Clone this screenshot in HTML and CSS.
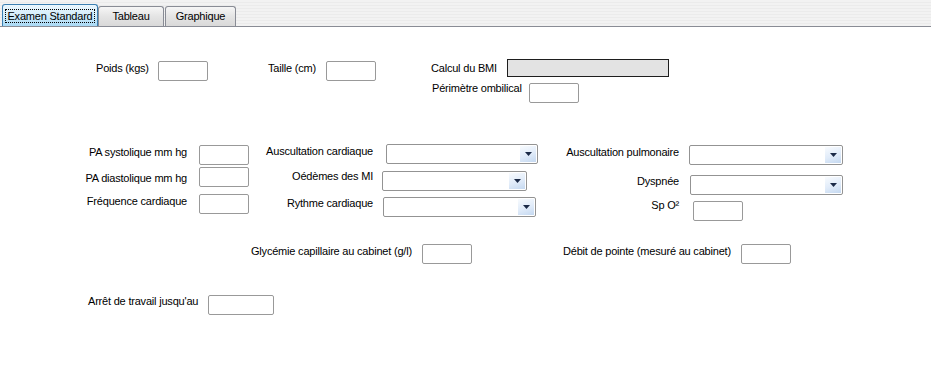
FILE: index.html
```html
<!DOCTYPE html>
<html lang="fr">
<head>
    <meta charset="UTF-8">
    <title>Examen Standard</title>
    <link rel="stylesheet" href="styles.css">
</head>
<body>
    <!-- Onglets -->
    <div class="tabs">
        <div class="tab active"><span class="focus">Examen Standard</span></div>
        <div class="tab tab-tableau">Tableau</div>
        <div class="tab tab-graph">Graphique</div>
    </div>

    <div class="page">
        <!-- Poids / taille / BMI -->
        <div class="row row-top">
            <label class="lbl l-poids">Poids (kgs)</label>
            <input type="text" class="txt t-top">
            <label class="lbl l-taille">Taille (cm)</label>
            <input type="text" class="txt t-top">
            <label class="lbl l-bmi">Calcul du BMI</label>
            <div class="bmi"></div>
        </div>
        <div class="row">
            <label class="lbl l-perim">Périmètre ombilical</label>
            <input type="text" class="txt t-perim">
        </div>

        <!-- Examen clinique -->
        <div class="clinic">
            <div class="col col1">
                <div class="item">
                    <label class="lbl">PA systolique mm hg</label>
                    <input type="text" class="txt">
                </div>
                <div class="item i-dia">
                    <label class="lbl">PA diastolique mm hg</label>
                    <input type="text" class="txt">
                </div>
                <div class="item i-freq">
                    <label class="lbl">Fréquence cardiaque</label>
                    <input type="text" class="txt">
                </div>
            </div>
            <div class="col col2">
                <div class="item">
                    <label class="lbl">Auscultation cardiaque</label>
                    <div class="combo c-ausc">
                        <span class="drop"><svg width="7" height="4" viewBox="0 0 7 4"><path d="M0 0h7L3.5 4z"/></svg></span>
                    </div>
                </div>
                <div class="item i-oed">
                    <label class="lbl">Oédèmes des MI</label>
                    <div class="combo c-oed">
                        <span class="drop"><svg width="7" height="4" viewBox="0 0 7 4"><path d="M0 0h7L3.5 4z"/></svg></span>
                    </div>
                </div>
                <div class="item i-ryt">
                    <label class="lbl">Rythme cardiaque</label>
                    <div class="combo c-ryt">
                        <span class="drop"><svg width="7" height="4" viewBox="0 0 7 4"><path d="M0 0h7L3.5 4z"/></svg></span>
                    </div>
                </div>
            </div>
            <div class="col col3">
                <div class="item">
                    <label class="lbl">Auscultation pulmonaire</label>
                    <div class="combo c-pulm">
                        <span class="drop"><svg width="7" height="4" viewBox="0 0 7 4"><path d="M0 0h7L3.5 4z"/></svg></span>
                    </div>
                </div>
                <div class="item i-dysp">
                    <label class="lbl">Dyspnée</label>
                    <div class="combo c-dysp">
                        <span class="drop"><svg width="7" height="4" viewBox="0 0 7 4"><path d="M0 0h7L3.5 4z"/></svg></span>
                    </div>
                </div>
                <div class="item i-spo">
                    <label class="lbl">Sp O²</label>
                    <input type="text" class="txt t-spo">
                </div>
            </div>
        </div>

        <!-- Mesures au cabinet -->
        <div class="row row-cab">
            <label class="lbl l-gly">Glycémie capillaire au cabinet (g/l)</label>
            <input type="text" class="txt">
            <label class="lbl l-debit">Débit de pointe (mesuré au cabinet)</label>
            <input type="text" class="txt">
        </div>

        <div class="row row-arret">
            <label class="lbl l-arret">Arrêt de travail jusqu'au</label>
            <input type="text" class="txt t-arret">
        </div>
    </div>
</body>
</html>
```
FILE: styles.css
```css
body {
    margin: 0;
    font-family: "Liberation Sans", Arial, sans-serif;
    font-size: 11px;
    letter-spacing: -0.2px;
    color: #000;
    background-color: #fff;
}

/* Onglets */
.tabs {
    height: 26px;
    border-bottom: 1px solid #898c95;
    display: flex;
    align-items: flex-end;
    padding-left: 2px;
    background: repeating-linear-gradient(#f2f2f2 0 2px, #ebebeb 2px 3px);
}
.tab {
    box-sizing: border-box;
    height: 20px;
    border: 1px solid #898c95;
    border-bottom: none;
    border-radius: 3px 3px 0 0;
    background: linear-gradient(#f6f6f6, #e4e4e4 50%, #d9d9d9);
    text-align: center;
    line-height: 13px;
    padding-top: 3px;
}
.tab.active {
    width: 96px;
    height: 22px;
    border-color: #3c7fb1;
    background: linear-gradient(#eaf6fd, #d6eefb 45%, #a8d9f5);
    padding-top: 4px;
}
.tab-tableau {
    width: 66px;
}
.tab-graph {
    width: 71px;
    margin-left: 1px;
}
.focus {
    display: inline-block;
    border: 1px dotted #000;
    padding: 0 1px;
    line-height: 12px;
}

/* Contrôles */
.lbl {
    white-space: nowrap;
    line-height: 13px;
    padding-top: 1px;
    flex: none;
}
.txt {
    box-sizing: border-box;
    width: 50px;
    height: 20px;
    margin: 0;
    padding: 0 2px;
    border: 1px solid #999;
    border-radius: 2px;
    background: #fff;
    font: inherit;
    flex: none;
}
.bmi {
    width: 162px;
    height: 18px;
    box-sizing: border-box;
    border: 1px solid #1e1e1e;
    background-color: #e3e3e3;
}
.combo {
    box-sizing: border-box;
    height: 20px;
    border: 1px solid #939393;
    border-radius: 2px;
    background: #fff;
    display: flex;
    justify-content: flex-end;
    padding: 1px;
    flex: none;
}
.drop {
    width: 16px;
    display: flex;
    align-items: center;
    justify-content: center;
    background: linear-gradient(160deg, #f8fbfe, #e0ebf9 55%, #c4d8f0);
}
.drop svg {
    fill: #1b2a47;
}

/* Lignes */
.page {
    padding-top: 32px;
}
.row {
    display: flex;
    align-items: flex-start;
}
.row-top .lbl, .t-top {
    margin-top: 2px;
}
.l-poids {
    margin-left: 96px;
    width: 62px;
}
.l-taille {
    margin-left: 60px;
    width: 58px;
}
.l-bmi {
    margin-left: 55px;
    width: 76px;
}
.l-perim {
    margin-left: 432px;
    width: 97px;
}
.t-perim {
    margin-top: 2px;
}

/* Examen clinique */
.clinic {
    display: flex;
    align-items: flex-start;
    margin-top: 41px;
}
.col {
    display: flex;
    flex-direction: column;
}
.item {
    display: flex;
    align-items: flex-start;
}
.col .lbl {
    text-align: right;
}
.col1 {
    margin-top: 1px;
}
.col1 .lbl {
    width: 187px;
}
.col1 .txt {
    margin-left: 12px;
}
.i-dia {
    margin-top: 2px;
}
.i-dia .lbl {
    margin-top: 4px;
}
.i-freq {
    margin-top: 7px;
}

.col2 .lbl {
    width: 124px;
}
.c-ausc {
    width: 152px;
    margin-left: 13px;
}
.i-oed {
    margin-top: 5px;
}
.c-oed {
    width: 145px;
    margin-left: 9px;
    margin-top: 2px;
}
.i-ryt {
    margin-top: 5px;
}
.c-ryt {
    width: 153px;
    margin-left: 10px;
    margin-top: 1px;
}

.col3 {
    margin-top: 1px;
}
.col3 .lbl {
    width: 141px;
}
.c-pulm {
    width: 154px;
    margin-left: 10px;
}
.i-dysp {
    margin-top: 9px;
}
.c-dysp {
    width: 153px;
    margin-left: 11px;
    margin-top: 1px;
}
.i-spo {
    margin-top: 3px;
}
.t-spo {
    margin-left: 14px;
    margin-top: 3px;
}

/* Cabinet */
.row-cab {
    margin-top: 23px;
}
.l-gly {
    margin-left: 251px;
    width: 171px;
}
.l-debit {
    margin-left: 91px;
    width: 178px;
}
.row-arret {
    margin-top: 30px;
}
.l-arret {
    margin-left: 88px;
    width: 120px;
}
.t-arret {
    width: 66px;
    margin-top: 1px;
}
```
